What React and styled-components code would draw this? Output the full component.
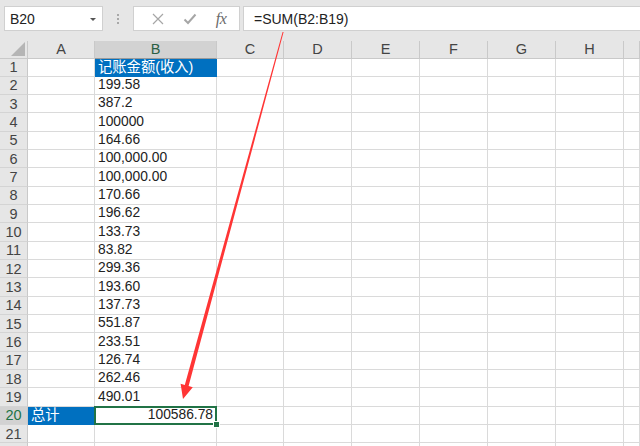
import React from "react";
import styled, { createGlobalStyle, css } from "styled-components";

const GlobalStyle = createGlobalStyle`
  html, body { margin: 0; padding: 0; background: #e6e6e6; }
  body { width: 640px; height: 446px; overflow: hidden; font-family: "Liberation Sans", "Noto Sans CJK SC", sans-serif; }
`;

const columns = ["A", "B", "C", "D", "E", "F", "G", "H", ""];
const values = [
  "199.58", "387.2", "100000", "164.66", "100,000.00", "100,000.00", "170.66",
  "196.62", "133.73", "83.82", "299.36", "193.60", "137.73", "551.87",
  "233.51", "126.74", "262.46", "490.01",
];

const App = () => {
  const rows = [];
  for (let r = 1; r <= 22; r++) {
    let a = "";
    let b = "";
    if (r === 1) b = "记账金额(收入)";
    else if (r <= 19) b = values[r - 2];
    else if (r === 20) {
      a = "总计";
      b = "100586.78";
    }
    rows.push({ r, a, b });
  }

  return (
    <Page>
      <GlobalStyle />
      <Toolbar>
        <NameBox>
          <span>B20</span>
          <Caret />
        </NameBox>
        <Dots>
          <i />
          <i />
          <i />
        </Dots>
        <ButtonBox>
          <ToolIcon>
            <svg width="12" height="12" viewBox="0 0 12 12">
              <path d="M1 1L11 11M11 1L1 11" stroke="#a6a6a6" strokeWidth="1.2" fill="none" />
            </svg>
          </ToolIcon>
          <ToolIcon>
            <svg width="14" height="12" viewBox="0 0 14 12">
              <path d="M1.5 6.5L5 10L12.5 1.5" stroke="#a6a6a6" strokeWidth="2" fill="none" />
            </svg>
          </ToolIcon>
          <Fx>fx</Fx>
        </ButtonBox>
        <FormulaBox>=SUM(B2:B19)</FormulaBox>
      </Toolbar>

      <Sheet>
        <Corner>
          <svg width="14" height="14" viewBox="0 0 14 14">
            <path d="M14 0L14 14L0 14Z" fill="#b5b5b5" />
          </svg>
        </Corner>
        {columns.map((c, i) => (
          <ColHead key={i} selected={c === "B"}>
            {c}
          </ColHead>
        ))}
        {rows.map(({ r, a, b }) => (
          <React.Fragment key={r}>
            <RowHead selected={r === 20}>{r < 22 ? r : ""}</RowHead>
            <Cell fill={r === 20 ? "blue" : undefined}>{a}</Cell>
            <Cell
              fill={r === 1 ? "blue" : undefined}
              align={r === 20 ? "right" : "left"}
              selected={r === 20}
            >
              {b}
              {r === 20 && <Handle />}
            </Cell>
            {columns.slice(2).map((c, i) => (
              <Cell key={i} />
            ))}
          </React.Fragment>
        ))}
      </Sheet>

      <Arrow width="640" height="446" viewBox="0 0 640 446">
        <polygon
          points="282.6,31.9 283.6,32.1 188.6,386.0 192.8,387.2 183,399 180.6,383.8 184.8,385.0"
          fill="#ff3535"
        />
      </Arrow>
    </Page>
  );
};

export default App;

const Page = styled.div`
  position: relative;
  width: 640px;
  height: 446px;
  overflow: hidden;
  background: #e6e6e6;
`;

const Toolbar = styled.div`
  display: flex;
  align-items: center;
  height: 25px;
  padding: 6px 0 10px 4px;
`;

const Box = styled.div`
  height: 25px;
  box-sizing: border-box;
  background: #ffffff;
  border: 1px solid #d0d0d0;
  display: flex;
  align-items: center;
`;

const NameBox = styled(Box)`
  width: 99px;
  padding: 0 6px 0 5px;
  justify-content: space-between;
  font-size: 14px;
  color: #222;
`;

const Caret = styled.span`
  width: 0;
  height: 0;
  border-left: 3px solid transparent;
  border-right: 3px solid transparent;
  border-top: 3px solid #555;
  margin-top: 1px;
`;

const Dots = styled.div`
  width: 30px;
  display: flex;
  flex-direction: column;
  align-items: center;
  gap: 2px;
  i {
    width: 2px;
    height: 2px;
    background: #a8a8a8;
  }
`;

const ButtonBox = styled(Box)`
  width: 107px;
  padding: 0 6px 0 12px;
  justify-content: space-between;
`;

const ToolIcon = styled.span`
  width: 24px;
  display: flex;
  justify-content: center;
`;

const Fx = styled.span`
  font-family: "Liberation Serif", serif;
  font-style: italic;
  font-size: 16px;
  letter-spacing: -0.5px;
  color: #6a6a6a;
  width: 24px;
  text-align: center;
`;

const FormulaBox = styled(Box)`
  flex: 1;
  margin-left: 3px;
  border-right: none;
  padding-left: 10px;
  font-size: 14px;
  color: #222;
`;

const Sheet = styled.div`
  display: grid;
  grid-template-columns: 28px 67px 122px 67px 68px 68px 68px 68px 68px 1fr;
  grid-template-rows: 17.5px;
  grid-auto-rows: 18.33px;
  background: #ffffff;
  font-size: 13.8px;
  color: #222;
`;

const headBase = css`
  background: #e6e6e6;
  box-sizing: border-box;
  border-right: 1px solid #c9c9c9;
  border-bottom: 1px solid #c9c9c9;
  display: flex;
  align-items: center;
  justify-content: center;
  color: #444;
  font-size: 14.5px;
`;

const Corner = styled.div`
  ${headBase};
  justify-content: flex-end;
  align-items: flex-end;
  padding: 0 2px 2px 0;
`;

const ColHead = styled.div`
  ${headBase};
  background: ${({ selected }) => (selected ? "#d2d2d2" : "#e6e6e6")};
  color: ${({ selected }) => (selected ? "#2b5f44" : "#444")};
  border-bottom: ${({ selected }) => (selected ? "1px solid #9a9a9a" : "1px solid #c9c9c9")};
`;

const RowHead = styled.div`
  ${headBase};
  background: ${({ selected }) => (selected ? "#d2d2d2" : "#e6e6e6")};
  color: ${({ selected }) => (selected ? "#217346" : "#444")};
  border-bottom-color: #d4d4d4;
`;

const Cell = styled.div`
  position: relative;
  box-sizing: border-box;
  border-right: 1px solid #dadada;
  border-bottom: 1px solid #dadada;
  display: flex;
  align-items: flex-end;
  justify-content: ${({ align }) => (align === "right" ? "flex-end" : "flex-start")};
  padding: 0 3px 1px 3px;
  white-space: nowrap;
  line-height: 16px;
  background: ${({ fill }) => (fill === "blue" ? "#0070c0" : "#ffffff")};
  color: ${({ fill }) => (fill === "blue" ? "#ffffff" : "#222")};
  border-color: ${({ fill }) => (fill === "blue" ? "#0070c0" : "#dadada")};
  ${({ fill }) =>
    fill === "blue" &&
    css`
      font-size: 14.3px;
    `}
  ${({ selected }) =>
    selected &&
    css`
      &::after {
        content: "";
        position: absolute;
        left: -1px;
        top: -1px;
        right: -1px;
        bottom: -1px;
        border: 2px solid #217346;
      }
    `}
`;

const Handle = styled.span`
  position: absolute;
  right: -4px;
  bottom: -4px;
  width: 5px;
  height: 5px;
  background: #217346;
  border: 1px solid #ffffff;
  z-index: 2;
`;

const Arrow = styled.svg`
  position: absolute;
  left: 0;
  top: 0;
  pointer-events: none;
`;
